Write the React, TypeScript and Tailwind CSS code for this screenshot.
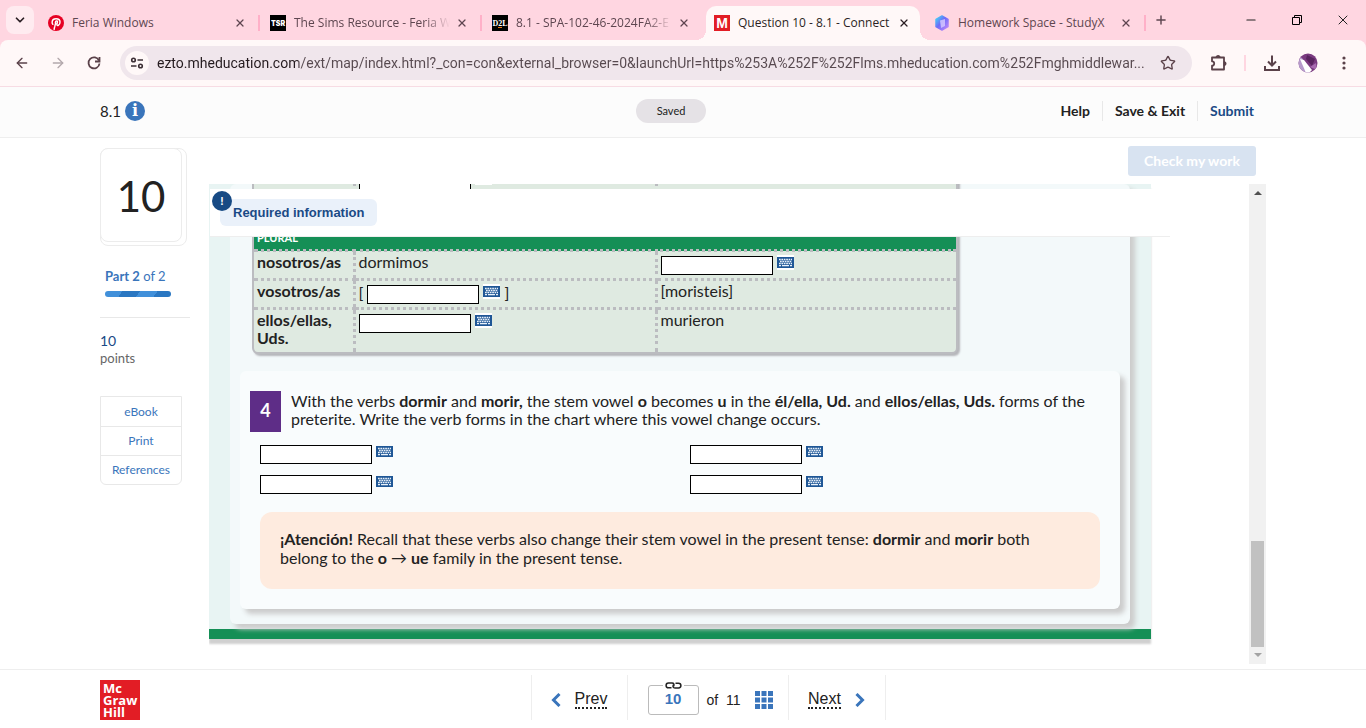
import React from 'react';
import { ArrowLeft, ArrowRight, ChevronDown, Minus, Plus, Star, X } from 'lucide-react';

const URL_TEXT =
  'ezto.mheducation.com/ext/map/index.html?_con=con&external_browser=0&launchUrl=https%253A%252F%252Flms.mheducation.com%252Fmghmiddlewar...';

const PinterestIcon = () => (
  <svg viewBox="0 0 24 24" className="size-4 shrink-0">
    <circle cx="12" cy="12" r="12" fill="#e60023" />
    <path
      d="M9.2 21.5c.2-1.6.6-3.200 1.100-4.800l1-4.200c-.5-1.700.2-3.700 1.700-3.700 2.600 0 .3 3.900.3 5.400 0 2.600 4.700 1.900 4.700-3.600 0-3-2.400-5-5.800-5-3.700 0-6 2.600-6 5.500 0 1 .3 2.100 1 2.900"
      fill="none"
      stroke="#fff"
      strokeWidth="2.200"
      strokeLinecap="round"
    />
  </svg>
);

const TsrIcon = () => (
  <svg viewBox="0 0 16 16" className="size-4 shrink-0">
    <rect width="16" height="16" fill="#000" />
    <text x="8" y="11" fontSize="7" fontWeight="900" fill="#fff" textAnchor="middle" fontFamily="Inter, sans-serif">TSR</text>
  </svg>
);

const D2lIcon = () => (
  <svg viewBox="0 0 16 16" className="size-4 shrink-0">
    <rect width="16" height="16" fill="#000" />
    <text x="8" y="11" fontSize="8" fontWeight="700" fill="#fff" textAnchor="middle" fontFamily="Liberation Serif, serif">D2L</text>
    <rect x="6" y="12" width="4" height="1" fill="#e87511" />
  </svg>
);

const ConnectIcon = () => (
  <svg viewBox="0 0 16 16" className="size-4 shrink-0">
    <rect width="16" height="16" fill="#e21d25" />
    <text x="8" y="13" fontSize="14" fontWeight="700" fill="#fff" textAnchor="middle" fontFamily="Liberation Sans, sans-serif">M</text>
  </svg>
);

const StudyXIcon = () => (
  <svg viewBox="0 0 16 16" className="size-4 shrink-0">
    <defs>
      <linearGradient id="studyx" x1="0" y1="0" x2="1" y2="1">
        <stop offset="0" stopColor="#3fe0f5" />
        <stop offset="0.45" stopColor="#6d6bf8" />
        <stop offset="1" stopColor="#c78bf9" />
      </linearGradient>
    </defs>
    <path d="M8 1l6 3.300v7.400L8 15l-6-3.300V4.300z" fill="url(#studyx)" stroke="url(#studyx)" strokeWidth="1.500" strokeLinejoin="round" />
    <path d="M6 5.500l5-1.500v7l-4 2z" fill="#d9ccff" opacity="0.8" />
  </svg>
);

const TuneIcon = () => (
  <svg viewBox="0 0 14 14" className="size-3.5" fill="none" stroke="#3c2f35" strokeWidth="1.600">
    <circle cx="3.500" cy="4" r="1.800" />
    <path d="M7.500 4H13M1 10h5.500" />
    <circle cx="10.500" cy="10" r="1.800" />
  </svg>
);

const ReloadIcon = () => (
  <svg viewBox="0 0 16 16" className="size-4" fill="none" stroke="#5a4149" strokeWidth="1.800">
    <path d="M13 5.500A5.500 5.500 0 1 0 13.500 8.500" />
    <path d="M13.500 2v4.500H9" />
  </svg>
);

const PuzzleIcon = () => (
  <svg viewBox="0 0 18 18" className="size-[18px]" fill="none" stroke="#5a4149" strokeWidth="1.800" strokeLinejoin="round">
    <path d="M2 3.500h12v12H2v-3.800a2.200 2.200 0 0 0 0-4.400z" />
    <path d="M6.500 3a1.700 1.700 0 0 1 3.200 0zM14.500 8a1.700 1.700 0 0 1 0 3.200z" fill="#5a4149" />
  </svg>
);

const DownloadIcon = () => (
  <svg viewBox="0 0 16 16" className="size-4" fill="none" stroke="#5a4149" strokeWidth="2">
    <path d="M8 0.500v10M4 6.500l4 4 4-4M1 11v4h14v-4" />
  </svg>
);

const AvatarIcon = () => (
  <svg viewBox="0 0 20 20" className="size-5">
    <clipPath id="avatar"><circle cx="10" cy="10" r="9.500" /></clipPath>
    <g clipPath="url(#avatar)">
      <rect width="20" height="20" fill="#7a3a80" />
      <path d="M0 3l4 2 9 15H0z" fill="#b79acb" />
      <path d="M2 6l4 1 8 10-3 3h-3z" fill="#fff" />
      <path d="M9 2l8 4-3 7-6-7z" fill="#5a2560" />
      <path d="M12 14l6-4 1 7z" fill="#a86bb0" />
    </g>
  </svg>
);

const DotsIcon = () => (
  <svg viewBox="0 0 4 14" className="h-3.5 w-1" fill="#5a4149">
    <circle cx="2" cy="2" r="1.600" />
    <circle cx="2" cy="7" r="1.600" />
    <circle cx="2" cy="12" r="1.600" />
  </svg>
);

const RestoreIcon = () => (
  <svg viewBox="0 0 11 11" className="size-[11px]" fill="none" stroke="#000">
    <path d="M0.500 2.500h7v7h-7zM2.500 2.500v-2h7v7h-2" />
  </svg>
);

const KeyboardIcon = () => (
  <svg viewBox="0 0 17 15" className="h-[15px] w-[17px]">
    <rect y="2" width="17" height="11" fill="#1f5796" />
    <path d="M2 4.500h13M3 6.500h12M2 8.500h13" stroke="#e8f1fa" strokeWidth="1.500" strokeDasharray="1.700 0.700" />
    <path d="M2 10.700h2M5 10.700h7M13 10.700h2" stroke="#e8f1fa" strokeWidth="1.300" />
  </svg>
);

const LinkIcon = () => (
  <svg viewBox="0 0 17 7" className="h-[7px] w-[17px]" fill="none" stroke="#222" strokeWidth="1.500">
    <path d="M6.500 5.800H3.500a2.400 2.400 0 0 1 0-4.800h3.500c2 0 2.500 1.500 1.500 3.500" />
    <path d="M10.500 1.200h3a2.400 2.400 0 0 1 0 4.800H10c-2 0-2.500-1.500-1.500-3.500" />
  </svg>
);

interface TabProps {
  icon: React.ReactNode;
  title: string;
  active?: boolean;
  divider?: boolean;
  fade?: boolean;
}

const Tab: React.FC<TabProps> = ({ icon, title, active, divider, fade }) => (
  <div
    className={
      active
        ? 'relative mr-1.5 flex w-[214px] items-center rounded-t-[10px] bg-[#fff8f8] pl-2 text-[#2b1f24]'
        : 'flex w-[222px] items-center pl-2 text-[#5e4650]'
    }
  >
    {active && (
      <>
        <span className="absolute bottom-0 -left-2.5 size-2.5 bg-[radial-gradient(circle_at_0_0,transparent_10px,#fff8f8_10px)]" />
        <span className="absolute -right-2.5 bottom-0 size-2.5 bg-[radial-gradient(circle_at_100%_0,transparent_10px,#fff8f8_10px)]" />
      </>
    )}
    {icon}
    <span
      className={
        fade
          ? 'ml-2 min-w-0 flex-1 text-xs whitespace-nowrap [mask-image:linear-gradient(to_right,#000_130px,transparent_156px)]'
          : 'ml-2 min-w-0 flex-1 text-xs whitespace-nowrap'
      }
    >
      {title}
    </span>
    <button aria-label="Close tab" className={active ? 'mr-2 flex size-4 items-center justify-center' : 'mr-2.5 flex size-4 items-center justify-center'}>
      <X className="size-3" strokeWidth={2.5} />
    </button>
    {!active && <span className={divider ? 'mr-0.5 h-4 w-0.5 bg-[#ffb0c8]' : 'mr-0.5 w-0.5'} />}
  </div>
);

const Browser = () => (
  <div className="shrink-0 bg-[#ffd6e1] font-['Open_Sans',sans-serif]">
    <div className="flex h-10 items-center">
      <button aria-label="Search tabs" className="mx-1.5 flex size-7 items-center justify-center rounded-lg bg-[#ffebf0]">
        <ChevronDown className="size-3.5 text-[#2b1f24]" strokeWidth={3} />
      </button>
      <div className="flex h-[34px] self-end">
        <Tab icon={<PinterestIcon />} title="Feria Windows" divider />
        <Tab icon={<TsrIcon />} title="The Sims Resource - Feria W" divider fade />
        <Tab icon={<D2lIcon />} title="8.1 - SPA-102-46-2024FA2-E" fade />
        <Tab icon={<ConnectIcon />} title="Question 10 - 8.1 - Connect" active />
        <Tab icon={<StudyXIcon />} title="Homework Space - StudyX" divider />
      </div>
      <button aria-label="New tab" className="ml-0.5 p-1">
        <Plus className="size-3.5 text-[#5e4650]" strokeWidth={2.5} />
      </button>
      <div className="ml-auto flex items-center gap-[30px] pr-[15px] [&>button]:flex [&>button]:w-4 [&>button]:justify-center">
        <button aria-label="Minimize"><Minus className="size-3.5" strokeWidth={2} /></button>
        <button aria-label="Restore"><RestoreIcon /></button>
        <button aria-label="Close"><X className="size-4" strokeWidth={1.5} /></button>
      </div>
    </div>
    <div className="flex h-[47px] items-center rounded-t-lg border-b border-[#f7dce4] bg-[#fff8f8] pl-3.5">
      <button aria-label="Back"><ArrowLeft className="size-4 text-[#5a4149]" /></button>
      <button aria-label="Forward" className="ml-5"><ArrowRight className="size-4 text-[#b3a8ac]" /></button>
      <button aria-label="Reload" className="ml-5"><ReloadIcon /></button>
      <div className="ml-[18px] flex h-[34px] flex-1 items-center rounded-full bg-[#f0e6ec] pl-[5px]">
        <button aria-label="Site information" className="flex size-6 items-center justify-center rounded-full bg-[#fff8f8]">
          <TuneIcon />
        </button>
        <input
          type="text"
          aria-label="Address"
          defaultValue={URL_TEXT}
          className="ml-2 min-w-0 flex-1 bg-[linear-gradient(90deg,#241a1e_141px,#57494f_141px)] bg-clip-text font-['Roboto',sans-serif] text-sm text-transparent outline-none"
        />
        <button aria-label="Bookmark" className="mr-4 ml-2"><Star className="size-4 text-[#5a4149]" /></button>
      </div>
      <div className="flex items-center pr-5">
        <button aria-label="Extensions" className="ml-[18px]"><PuzzleIcon /></button>
        <span className="ml-4 h-4 w-0.5 bg-[#ffd6e1]" />
        <button aria-label="Downloads" className="ml-[18px]"><DownloadIcon /></button>
        <button aria-label="Profile" className="ml-[18px]"><AvatarIcon /></button>
        <button aria-label="Menu" className="ml-6"><DotsIcon /></button>
      </div>
    </div>
  </div>
);

const Header = () => (
  <header className="grid h-[51px] shrink-0 grid-cols-[1fr_auto_1fr] items-center border-b border-[#eee] bg-[#fcfcfc] pr-28 pb-0.5 pl-[88px]">
    <div className="flex items-center gap-1 pl-3 text-[15px]">
      8.1
      <button aria-label="Assignment information" className="flex size-5 items-center justify-center rounded-full bg-[#3a75bb] font-['DejaVu_Serif',serif] text-base leading-none font-bold text-white">
        i
      </button>
    </div>
    <span className="w-[70px] rounded-full bg-[#e5e2e6] text-center text-[11px] leading-6">Saved</span>
    <nav className="flex items-center justify-end text-sm font-bold">
      <a href="#help" className="pr-3">Help</a>
      <a href="#save" className="border-l border-[#e8e8e8] px-3">Save &amp; Exit</a>
      <a href="#submit" className="border-l border-[#e8e8e8] pl-3 text-[#1a4a86]">Submit</a>
    </nav>
  </header>
);

const Sidebar = () => (
  <aside className="w-[109px] shrink-0 pt-2.5">
    <div className="h-[98px] w-[87px] rounded-lg border border-[#ececec]">
      <div className="-mt-px -ml-px flex h-[94px] w-[82px] items-center justify-center rounded-lg border border-[#ececec] bg-white pt-0.5 text-[42px]">
        10
      </div>
    </div>
    <div className="mt-[21px] pl-[5px] text-[13px] text-[#3a75bb]">
      <b>Part 2</b> of 2
    </div>
    <div className="mt-1 ml-[5px] h-1.5 w-[66px] rounded-full bg-[linear-gradient(125deg,#4190da_25%,#2a77c2_25%,#2a77c2_50%,#4190da_50%,#4190da_75%,#2a77c2_75%)]" />
    <div className="mt-5 w-[90px] border-t border-[#e8e8e8] pt-3.5 text-sm leading-[18px] text-[#1a4a86]">10</div>
    <div className="text-[13px] leading-4 text-[#666]">points</div>
    <nav className="mt-[30px] w-[82px] divide-y divide-[#e8e8e8] rounded-b-md border border-[#e8e8e8] text-center text-xs leading-7 text-[#3a75bb]">
      <a href="#ebook" className="block pt-px">eBook</a>
      <a href="#print" className="block">Print</a>
      <a href="#references" className="block">References</a>
    </nav>
  </aside>
);

const AnswerField: React.FC<{ label: string; plain?: boolean }> = ({ label, plain }) => (
  <span className="inline-flex items-start gap-1 align-top">
    <input type="text" aria-label={label} className="mt-px h-[19px] w-28 border border-black bg-white px-1 text-sm outline-none" />
    <button aria-label={'Special characters for ' + label} className={plain ? '' : 'bg-white'}>
      <KeyboardIcon />
    </button>
  </span>
);

const VerbTable = () => (
  <div className="-mt-5 ml-[22px] w-[706px] overflow-hidden rounded-md border-2 border-[#bbbcc0] bg-[#dfeae1] shadow-[2px_2px_2px_#b5b6ba]">
    <table className="w-full table-fixed border-collapse text-left align-top [&_td]:border-[3px] [&_td]:border-dotted [&_td]:border-[#bbbcc0] [&_td]:px-[3px] [&_td]:pt-px [&_td]:align-top [&_td:last-child]:border-r-0 [&_th]:px-[3px] [&_th]:pt-px [&_th]:align-top">
      <colgroup>
        <col className="w-[100px]" />
        <col className="w-[302px]" />
        <col />
      </colgroup>
      <tbody>
        <tr className="h-[59px]">
          <th scope="row" />
          <td><AnswerField label="él/ella, Ud." /></td>
          <td />
        </tr>
        <tr className="h-6 bg-[#158f56]">
          <th colSpan={3} className="border-b-[3px] border-dotted border-[#bbbcc0] text-[11px] leading-[18px] text-white">PLURAL</th>
        </tr>
        <tr className="h-[29px]">
          <th scope="row" className="border-b-[3px] border-dotted border-[#bbbcc0]">nosotros/as</th>
          <td>dormimos</td>
          <td><div className="pt-0.5"><AnswerField label="nosotros/as, morir" /></div></td>
        </tr>
        <tr className="h-[29px]">
          <th scope="row" className="border-b-[3px] border-dotted border-[#bbbcc0]">vosotros/as</th>
          <td><div className="flex gap-1 pt-0.5"><span>[</span><AnswerField label="vosotros/as, dormir" /><span>]</span></div></td>
          <td>[moristeis]</td>
        </tr>
        <tr className="h-[43px] [&_td]:border-b-0">
          <th scope="row">ellos/ellas, Uds.</th>
          <td><div className="pt-0.5"><AnswerField label="ellos/ellas, Uds., dormir" /></div></td>
          <td>murieron</td>
        </tr>
      </tbody>
    </table>
  </div>
);

const StepFour = () => (
  <section className="mx-2.5 mt-[17px] mb-[15px] rounded-md bg-[#f9fcfd] pt-5 pb-5 shadow-[5px_5px_5px_#ccc]">
    <div className="flex gap-2.5 pl-2.5">
      <span className="flex h-[41px] w-[31px] shrink-0 items-center justify-center bg-[#5e2d87] pb-0.5 text-lg font-bold text-white">4</span>
      <p className="pt-px pr-5">
        With the verbs <b>dormir</b> and <b>morir,</b> the stem vowel <b>o</b> becomes <b>u</b> in the{' '}
        <b>él/ella, Ud.</b> and <b>ellos/ellas, Uds.</b> forms of the preterite. Write the verb forms in the chart
        where this vowel change occurs.
      </p>
    </div>
    <div className="mt-3 grid grid-cols-2 gap-y-2.5 pl-5">
      <AnswerField label="Form 1" plain />
      <AnswerField label="Form 2" plain />
      <AnswerField label="Form 3" plain />
      <AnswerField label="Form 4" plain />
    </div>
    <div className="mx-5 mt-[18px] rounded-xl bg-[#feebdf] pt-[17px] pr-8 pb-[22px] pl-5 leading-[19px]">
      <b>¡Atención!</b> Recall that these verbs also change their stem vowel in the present tense: <b>dormir</b> and{' '}
      <b>morir</b> both belong to the <b>o</b> → <b>ue</b> family in the present tense.
    </div>
  </section>
);

const ScrollBar = () => (
  <div className="flex w-[17px] shrink-0 flex-col items-center bg-[#f1f1f1] py-[7px]">
    <span className="border-x-4 border-b-4 border-x-transparent border-b-[#505050]" />
    <span className="flex-1" />
    <span className="mb-1.5 h-[106px] w-[13px] bg-[#c1c1c1]" />
    <span className="border-x-4 border-t-4 border-x-transparent border-t-[#a3a3a3]" />
  </div>
);

const Question = () => (
  <main className="flex min-w-0 flex-1 flex-col pt-2 pb-[5px]">
    <button disabled className="mr-2.5 h-[30px] w-32 shrink-0 self-end rounded-[3px] bg-[#d8e3f1] text-sm font-bold text-white">
      Check my work
    </button>
    <div className="mt-2 flex min-h-0 flex-1">
      <div className="relative min-w-0 flex-1 overflow-hidden">
        <div className="mr-[98px] border-b-10 border-[#158f56] bg-[#e8f4f3] px-[21px] pb-[5px] text-base leading-[18px] shadow-[0_5px_2px_#d0d0d0]">
          <div className="flow-root rounded-md bg-[#f3f9fa] shadow-[5px_5px_5px_#ccc]">
            <VerbTable />
            <StepFour />
          </div>
        </div>
        {/* sticky banner over the scrolled question */}
        <div className="absolute top-[5px] right-[79px] left-px h-12 border-b border-[#eee] bg-white pt-2.5 pl-2.5">
          <span className="inline-block rounded-md bg-[#eaf1fa] px-[13px] font-['Liberation_Sans',sans-serif] text-[13px] leading-[27px] font-bold text-[#1a4a86]">
            Required information
          </span>
          <span className="absolute top-0.5 left-0.5 flex size-5 items-center justify-center rounded-full bg-[#174a84] text-xs font-bold text-white">!</span>
        </div>
      </div>
      <ScrollBar />
    </div>
  </main>
);

const Footer = () => (
  <footer className="flex h-[59px] shrink-0 items-start border-t border-[#eee] bg-white pr-[50px] pl-[100px]">
    <div className="flex-1 pt-2.5">
      <div className="h-10 w-10 bg-[#e21d25] pt-0.5 pl-[3px] font-['Open_Sans',sans-serif] text-[13px] leading-3 font-bold text-white">
        Mc<br />Graw<br />Hill
      </div>
    </div>
    <nav className="mt-[5px] flex h-[45px] items-center divide-x divide-[#eee] border-x border-[#eee] font-['Liberation_Sans',sans-serif] text-base [&>*]:h-full">
      <a href="#prev" className="flex w-24 items-center justify-center gap-3.5 pt-1">
        <svg viewBox="0 0 10 14" className="h-3.5 w-2.5" fill="none" stroke="#3a75bb" strokeWidth="3"><path d="M8.500 1L2.500 7l6 6" /></svg>
        <span className="border-b-2 border-dotted border-[#222] leading-4">Prev</span>
      </a>
      <div className="flex w-[161px] items-center pt-1 pl-5">
        <button className="relative h-[30px] w-[51px] rounded-[3px] border border-[#bbb] text-[15px] font-bold text-[#3a75bb]">
          10
          <span className="absolute -top-1 left-3.5 bg-white px-0.5"><LinkIcon /></span>
        </button>
        <span className="ml-2 text-sm">of &nbsp;11</span>
        <button aria-label="Question list" className="ml-3.5">
          <svg viewBox="0 0 18 18" className="size-[18px]" fill="#3a75bb">
            <path d="M0 0h5v5H0zM6.500 0h5v5h-5zM13 0h5v5h-5zM0 6.500h5v5H0zM6.500 6.500h5v5h-5zM13 6.500h5v5h-5zM0 13h5v5H0zM6.500 13h5v5h-5zM13 13h5v5h-5z" />
          </svg>
        </button>
      </div>
      <a href="#next" className="flex w-24 items-center justify-center gap-3.5 pt-1">
        <span className="border-b-2 border-dotted border-[#222] leading-4">Next</span>
        <svg viewBox="0 0 10 14" className="h-3.5 w-2.5" fill="none" stroke="#3a75bb" strokeWidth="3"><path d="M1.500 1l6 6-6 6" /></svg>
      </a>
    </nav>
    <div className="flex-1" />
  </footer>
);

const App: React.FC = () => {
  return (
    <div className="flex h-screen flex-col overflow-hidden bg-white font-['Lato',sans-serif] text-[#222]">
      <Browser />
      <Header />
      <div className="flex min-h-0 flex-1 px-[100px]">
        <Sidebar />
        <Question />
      </div>
      <Footer />
    </div>
  );
};

export default App;
